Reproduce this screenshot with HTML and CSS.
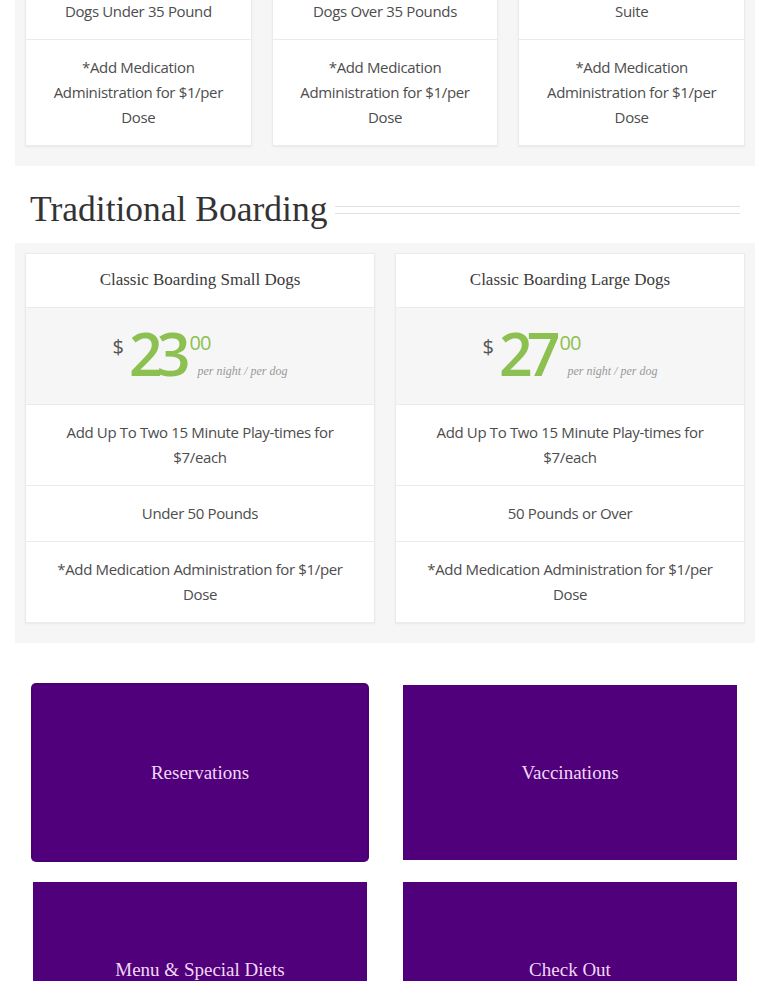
FILE: index.html
```
<!DOCTYPE html>
<html lang="en">
<head>
<meta charset="utf-8">
<title>Boarding Rates</title>
<link rel="stylesheet" href="styles.css">
</head>
<body>
<div class="page">
  <section class="panel panel-top">
    <div class="cards cards-3">
      <div class="card">
        <div class="row">Dogs Under 35 Pound</div>
        <div class="row">*Add Medication Administration for $1/per Dose</div>
      </div>
      <div class="card">
        <div class="row">Dogs Over 35 Pounds</div>
        <div class="row">*Add Medication Administration for $1/per Dose</div>
      </div>
      <div class="card">
        <div class="row">Suite</div>
        <div class="row">*Add Medication Administration for $1/per Dose</div>
      </div>
    </div>
  </section>

  <div class="heading-row">
    <h2 class="heading">Traditional Boarding</h2>
    <div class="heading-line"></div>
  </div>

  <section class="panel">
    <div class="cards cards-2">
      <div class="card">
        <div class="card-title">Classic Boarding Small Dogs</div>
        <div class="price">
          <span class="currency">$</span>
          <span class="amount">23</span>
          <span class="price-side">
            <span class="cents">00</span>
            <span class="unit">per night / per dog</span>
          </span>
        </div>
        <div class="row">Add Up To Two 15 Minute Play-times for $7/each</div>
        <div class="row">Under 50 Pounds</div>
        <div class="row">*Add Medication Administration for $1/per Dose</div>
      </div>
      <div class="card">
        <div class="card-title">Classic Boarding Large Dogs</div>
        <div class="price">
          <span class="currency">$</span>
          <span class="amount">27</span>
          <span class="price-side">
            <span class="cents">00</span>
            <span class="unit">per night / per dog</span>
          </span>
        </div>
        <div class="row">Add Up To Two 15 Minute Play-times for $7/each</div>
        <div class="row">50 Pounds or Over</div>
        <div class="row">*Add Medication Administration for $1/per Dose</div>
      </div>
    </div>
  </section>

  <nav class="buttons">
    <a class="btn btn-active" href="#">Reservations</a>
    <a class="btn" href="#">Vaccinations</a>
    <a class="btn" href="#">Menu &amp; Special Diets</a>
    <a class="btn" href="#">Check Out</a>
  </nav>
</div>
</body>
</html>
```

FILE: styles.css
```
* { box-sizing: border-box; }

html, body {
  margin: 0;
  padding: 0;
  background: #ffffff;
}

body {
  font-family: "Open Sans", "Liberation Sans", sans-serif;
  color: #555555;
  overflow: hidden;
}

.page {
  padding: 0 15px;
}

.panel {
  background: #f6f6f6;
  padding: 10px 10px 20px;
}

.panel-top {
  margin-top: -27px;
}

.cards {
  display: grid;
  gap: 20px;
}

.cards-3 { grid-template-columns: repeat(3, 1fr); }
.cards-2 { grid-template-columns: repeat(2, 1fr); }

.card {
  background: #ffffff;
  border: 1px solid #ebebeb;
  box-shadow: 0 1px 2px rgba(0, 0, 0, 0.06);
}

.row {
  padding: 15px 15px;
  font-size: 15px;
  line-height: 25px;
  letter-spacing: -0.35px;
  text-align: center;
  color: #4d4d4d;
  border-bottom: 1px solid #ebebeb;
}

.row:last-child { border-bottom: none; }

.card-title {
  padding: 13px 15px 15px;
  font-family: "Liberation Serif", "DejaVu Serif", serif;
  font-size: 17px;
  line-height: 25px;
  text-align: center;
  color: #3a3a3a;
  border-bottom: 1px solid #ebebeb;
}

.price {
  display: flex;
  justify-content: center;
  align-items: flex-start;
  background: #f6f6f6;
  padding: 15px 0 21px;
  border-bottom: 1px solid #ebebeb;
}

.currency {
  font-size: 20px;
  line-height: 20px;
  color: #555555;
  margin-top: 14px;
  margin-right: 5px;
}

.amount {
  font-size: 59px;
  line-height: 60px;
  letter-spacing: -6px;
  color: #8cc152;
  font-weight: 600;
}

.price-side {
  display: flex;
  flex-direction: column;
  align-items: flex-start;
  margin-left: 5px;
}

.cents {
  font-size: 20px;
  line-height: 20px;
  color: #8cc152;
  margin-top: 10px;
  letter-spacing: -1px;
}

.unit {
  font-family: "Liberation Serif", "DejaVu Serif", serif;
  font-style: italic;
  font-size: 12px;
  line-height: 14px;
  color: #999999;
  margin-top: 11px;
  padding-left: 8px;
  white-space: nowrap;
}

.heading-row {
  display: flex;
  align-items: center;
  gap: 8px;
  height: 77px;
  padding: 10px 15px 0;
}

.heading {
  margin: 0;
  font-family: "Liberation Serif", "DejaVu Serif", serif;
  font-weight: 400;
  font-size: 35.5px;
  line-height: 1;
  color: #333333;
  white-space: nowrap;
}

.heading-line {
  flex: 1;
  height: 8px;
  border-top: 1px solid #e0e0e0;
  border-bottom: 1px solid #e0e0e0;
}

.buttons {
  display: grid;
  grid-template-columns: repeat(2, 1fr);
  column-gap: 36px;
  row-gap: 22px;
  padding: 42px 18px 0;
}

.btn {
  display: flex;
  align-items: center;
  justify-content: center;
  height: 175px;
  background: #4f007a;
  color: #f2d8f7;
  text-decoration: none;
  font-family: "Liberation Serif", "DejaVu Serif", serif;
  font-size: 19px;
}

.btn-active {
  border-radius: 3px;
  box-shadow: 0 0 0 2px #4a0073;
}
```
